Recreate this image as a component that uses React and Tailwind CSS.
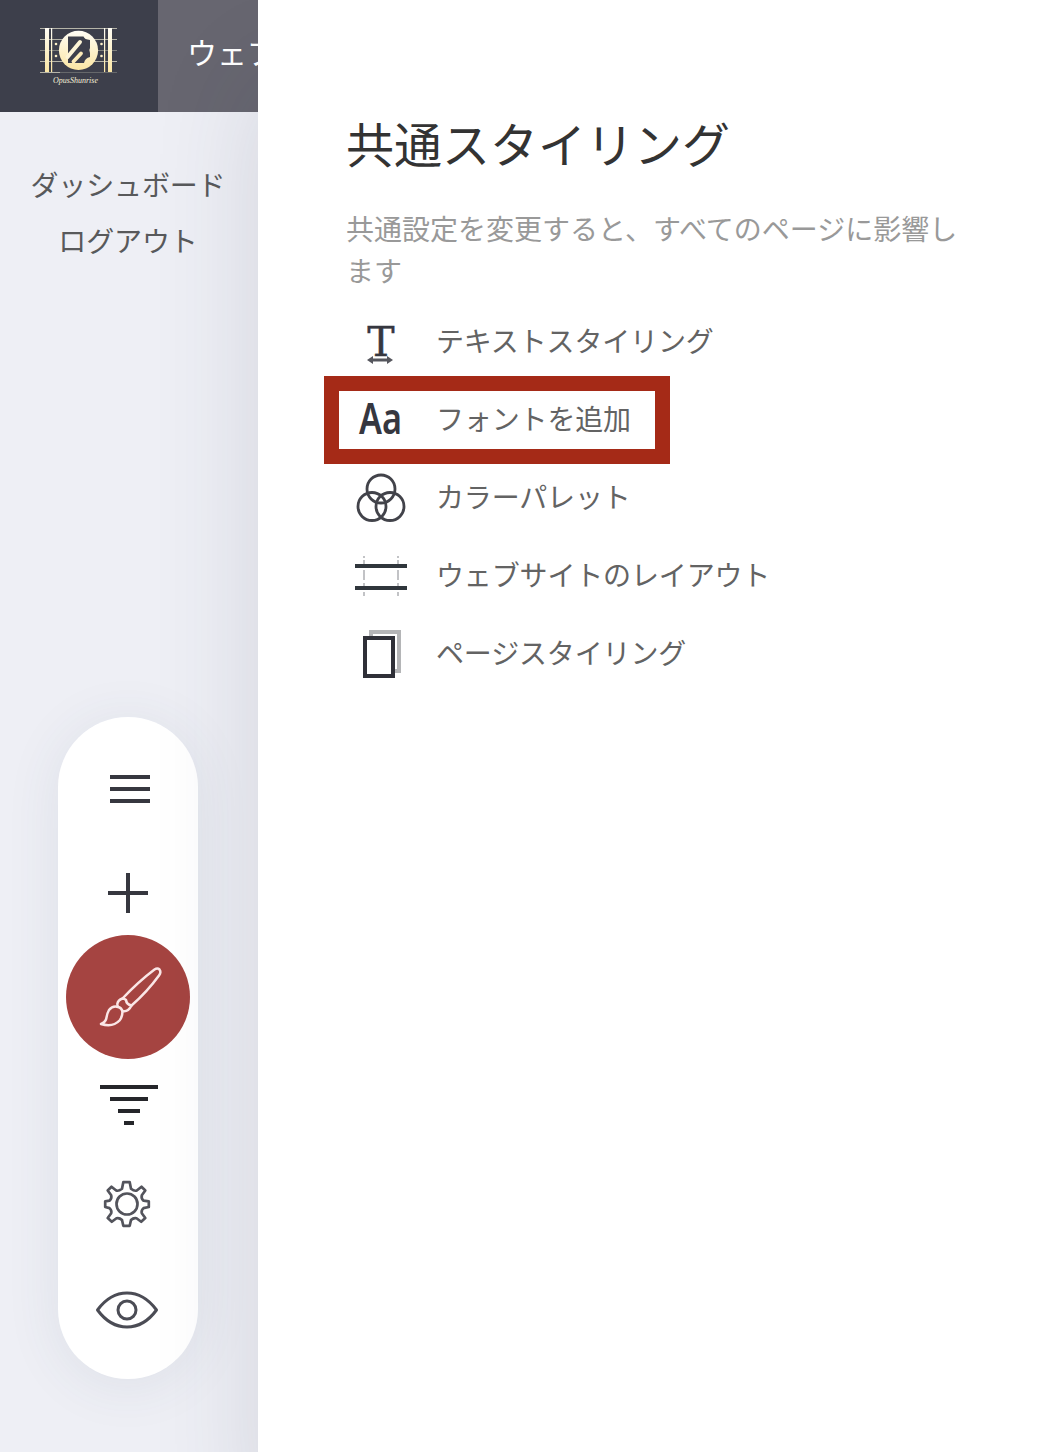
const INK = '#36373f';

function Logo() {
  return (
    <svg width="158" height="112" viewBox="0 0 158 112" aria-label="Logo">
      <defs>
        <linearGradient id="gold" x1="0" y1="0" x2="0" y2="1">
          <stop offset="0" stopColor="#fffdf5" />
          <stop offset="1" stopColor="#fbe6a4" />
        </linearGradient>
      </defs>
      <g fill="#b5b4a8">
        <rect x="40" y="28" width="77" height="1" />
        <rect x="40" y="39" width="77" height="1" />
        <rect x="40" y="50" width="77" height="1" opacity=".55" />
        <rect x="40" y="61" width="77" height="1" />
        <rect x="40" y="72" width="20" height="1" />
        <rect x="60" y="72" width="57" height="1" opacity=".35" />
      </g>
      <g fill="url(#gold)">
        <rect x="45" y="28" width="4" height="44" />
        <rect x="51" y="28" width="1.2" height="44" />
        <rect x="104" y="28" width="1.2" height="44" />
        <rect x="108" y="28" width="4" height="44" />
        <circle cx="78.5" cy="50.3" r="19.6" />
      </g>
      <g fill="#fdf0c8">
        <circle cx="56" cy="44" r="1.3" />
        <circle cx="56" cy="56" r="1.3" />
        <circle cx="101.5" cy="44" r="1.3" />
        <circle cx="101.5" cy="56" r="1.3" />
      </g>
      <path d="M68 36.500h15.500q1 3 6.500 3.500v8q-1.500 2 0 5v4q-5 1-6 6H68z" fill="#3d3f4b" />
      <path d="M67.500 57 80 42" stroke="#fdf4d6" strokeWidth="4" strokeLinecap="round" />
      <path d="M73.500 61.500 81 53.500" stroke="#fcebb8" strokeWidth="3.800" strokeLinecap="round" />
      <text x="53" y="82.500" fill="#f6efd8" fontSize="8" fontStyle="italic" textLength="45" lengthAdjust="spacingAndGlyphs" fontFamily="'Liberation Serif', serif">OpusShunrise</text>
    </svg>
  );
}

const tools = {
  menu: (
    <path d="M52 40h40M52 52h40M52 64h40" stroke={INK} strokeWidth="4" />
  ),
  plus: <path d="M50 52h40M70 32v40" stroke={INK} strokeWidth="4" />,
  brush: (
    <g stroke="#fae6e6" strokeWidth="2.500" strokeLinejoin="round" strokeLinecap="round">
      <path d="M64.500 53.500Q80 37 96.500 24.500Q99.500 22.500 101.500 24.500Q103.500 27 101 30.500Q89 47 73.500 60.500" />
      <path d="M64.500 53.500Q60 55 59.300 59Q59 61 60.500 62Q63.500 63 64.300 66Q70 67.500 73.500 60.500Q68.500 59.500 68 55Q66.500 53.500 64.500 53.500Z" />
      <path d="M60 62Q55 60 51 65Q49 68.500 48.500 72.500Q48 77 43 79Q55 82.500 61.500 75.500Q65 71 64.300 65.500" />
    </g>
  ),
  filter: (
    <path d="M42 38h58M52 50h38M60 62h22M66 74h10" stroke="#25262a" strokeWidth="4" />
  ),
  gear: (
    <g stroke="#53545c" strokeWidth="2.700" strokeLinejoin="round">
      <path d="M65.300 29.200H71.700L73 35.800Q76.500 38.500 78.800 37.500L83.500 33.700L87.300 37.500L83.800 42.200Q83 45.500 85.500 47.600L90.800 48.300V54L85.500 55.100Q83 57.500 83.800 60.200L87.300 65L83.200 68.800L78.500 65.200Q75.500 64.500 73 67L71.700 72.800H65.300L64 67Q61.500 64.500 58.500 65.200L53.800 68.800L49.700 65L53.200 60.200Q54 57.500 51.500 55.100L47.200 54V48.300L51.500 47.600Q54 45.500 53.200 42.200L49.700 37.500L53.500 33.700L58.200 37.500Q60.500 38.500 64 35.800Z" />
      <circle cx="69" cy="51" r="10.500" />
    </g>
  ),
  eye: (
    <g stroke="#4b4c55" strokeWidth="3" strokeLinejoin="round">
      <path d="M39.500 53Q52 36 69 36Q86 36 98.500 53Q86 70 69 70Q52 70 39.500 53Z" />
      <circle cx="69" cy="53" r="9" />
    </g>
  ),
};

const entries = [
  {
    label: 'テキストスタイリング',
    icon: (
      <>
        <text x="35" y="54" textAnchor="middle" fontSize="41" fill={INK} stroke={INK} strokeWidth=".4" fontFamily="'DejaVu Serif', serif">T</text>
        <path d="M25 58h18" stroke="#55565d" strokeWidth="3" />
        <path d="m27 54-6 4 6 4zM41 54l6 4-6 4z" fill="#55565d" />
      </>
    ),
  },
  {
    label: 'フォントを追加',
    icon: (
      <text x="13" y="53.500" fontSize="43" fontWeight="600" fill={INK} textLength="43" lengthAdjust="spacingAndGlyphs" fontFamily="'Noto Sans', sans-serif">Aa</text>
    ),
  },
  {
    label: 'カラーパレット',
    icon: (
      <g fill="none" stroke="#42434a" strokeWidth="2.800">
        <circle cx="35" cy="31" r="14" />
        <circle cx="26" cy="48.500" r="14" />
        <circle cx="44" cy="48.500" r="14" />
      </g>
    ),
  },
  {
    label: 'ウェブサイトのレイアウト',
    icon: (
      <>
        <path d="M18 20v42M52 20v42" stroke="#c2c3c6" strokeWidth="2" strokeDasharray="2 2 7 3 10 3 7 2 4 2" />
        <path d="M9 30h52M9 52h52" stroke="#30363c" strokeWidth="4" />
      </>
    ),
  },
  {
    label: 'ページスタイリング',
    icon: (
      <>
        <path d="M25 22V18h28v39h-5" stroke="#b4b5b7" strokeWidth="4" fill="none" />
        <rect x="19" y="24" width="28" height="38" stroke="#2f3038" strokeWidth="4" fill="#fff" />
      </>
    ),
  },
];

function Tool({ name, active }) {
  return (
    <button className={active ? '-my-[10px] mx-auto flex h-[124px] w-[124px] shrink-0 items-center justify-center rounded-full bg-[#a54441]' : 'flex h-[104px] shrink-0 items-center justify-center'}>
      <svg className="shrink-0" width="140" height="104" viewBox="0 0 140 104" fill="none">
        {tools[name]}
      </svg>
    </button>
  );
}

export default function App() {
  return (
    <div className="flex h-[1452px] w-[1054px] overflow-hidden bg-[#eeeff5] font-['Noto_Sans_CJK_JP','Noto_Sans',sans-serif] text-[28px]">
      <div className="flex w-[258px] shrink-0 flex-col">
        <header className="flex h-[112px] shrink-0 text-white">
          <div className="w-[158px] shrink-0 bg-[#3d3f4b]">
            <Logo />
          </div>
          <div className="flex w-[100px] items-center overflow-hidden whitespace-nowrap bg-[#676670] pb-[10px] pl-[29px] text-[30px]">
            ウェブ
          </div>
        </header>
        <nav className="mt-[44px] flex w-[256px] flex-col text-center leading-[56px] tracking-[-0.15px] text-[#58595b]">
          <a>ダッシュボード</a>
          <a>ログアウト</a>
        </nav>
        <div className="ml-[58px] mt-[449px] flex h-[662px] w-[140px] flex-col rounded-[70px] bg-white pt-[20px] shadow-[0_6px_56px_rgba(60,75,100,0.09)]">
          <Tool name="menu" />
          <Tool name="plus" />
          <Tool name="brush" active />
          <Tool name="filter" />
          <Tool name="gear" />
          <Tool name="eye" />
        </div>
      </div>
      <main className="relative z-10 flex-1 bg-white pl-[88px] pr-[86px] pt-[106px] shadow-[0_80px_100px_rgba(50,60,75,0.14)]">
        <h1 className="text-[48px] leading-[72px] text-[#333]">共通スタイリング</h1>
        <p className="mt-[29px] w-[620px] leading-[42px] text-[#999]">
          共通設定を変更すると、すべてのページに影響します
        </p>
        <ul className="mt-[11px]">
          {entries.map((entry, index) => (
            <li key={entry.label} className="relative flex h-[78px] items-center text-[#636363]">
              <svg className="mr-[20px] shrink-0" width="70" height="78" viewBox="0 0 70 78">
                {entry.icon}
              </svg>
              <span className="pb-[2px] leading-[42px] tracking-[-0.15px]">{entry.label}</span>
              {index === 1 && (
                <div className="pointer-events-none absolute -left-[22.500px] -top-[4px] h-[88px] w-[346px] border-[15px] border-[#a52a17]" />
              )}
            </li>
          ))}
        </ul>
      </main>
    </div>
  );
}
